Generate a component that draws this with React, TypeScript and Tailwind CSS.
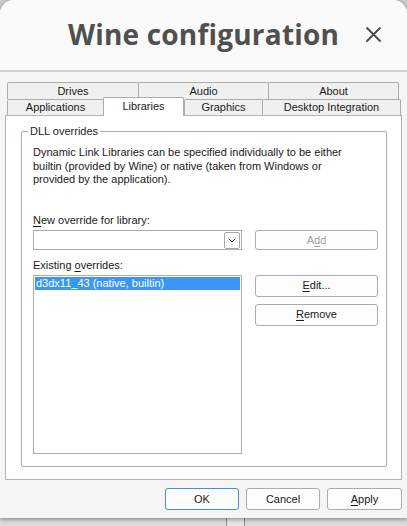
import React from 'react'

// Wine configuration dialog, "Libraries" tab

function Btn({
  children,
  className = '',
  disabled = false,
  primary = false,
}: {
  children: React.ReactNode
  className?: string
  disabled?: boolean
  primary?: boolean
}) {
  return (
    <div
      className={`flex items-center justify-center rounded-[3px] border bg-[#fdfdfd] text-[11px] ${
        primary ? 'border-[#3c92e6]' : 'border-[#acacac]'
      } ${disabled ? 'text-[#a3a3a3]' : 'text-[#1a1a1a]'} ${className}`}
    >
      {children}
    </div>
  )
}

function Tab({ label, width, selected = false, tall = false }: { label: string; width: string; selected?: boolean; tall?: boolean }) {
  if (selected) {
    return (
      <div className={`${width} relative z-10 -mt-[2px] flex h-[19px] items-center justify-center rounded-t-[2px] border border-b-0 border-[#acacac] bg-white pb-[1px]`}>
        {label}
      </div>
    )
  }
  return (
    <div
      className={`${width} ${tall ? 'h-[17px]' : 'h-[16px]'} flex items-center justify-center rounded-t-[2px] border border-b-0 border-[#acacac] bg-[#f0f0f0] -mr-px`}
    >
      {label}
    </div>
  )
}

export default function App() {
  return (
    <div className="flex h-[526px] w-[407px] flex-col overflow-hidden bg-[#cfcfcf] font-['Liberation_Sans',sans-serif] text-[11px] text-[#1a1a1a]">
      {/* window */}
      <div className="relative z-10 flex h-[518px] w-[407px] shrink-0 flex-col rounded-t-[14px] bg-[#f5f5f5] shadow-[0_1px_5px_rgba(0,0,0,0.45)]">
        {/* title bar */}
        <div className="relative flex h-[72px] shrink-0 items-center justify-center rounded-t-[14px] border-b-2 border-[#d2d2d2] bg-[#fafafa] pb-[2px]">
          <span className="font-['Open_Sans',sans-serif] text-[28px] font-bold tracking-[0.2px] text-[#505050]">Wine configuration</span>
          <div className="absolute right-[26px] top-[27px]">
            <svg width="15" height="15" viewBox="0 0 15 15">
              <path d="M1 1 L14 14 M14 1 L1 14" stroke="#4a4a4a" strokeWidth="1.8" strokeLinecap="round" />
            </svg>
          </div>
        </div>

        {/* body */}
        <div className="flex flex-1 flex-col px-[5px] pt-[10px]">
          {/* tabs */}
          <div className="flex flex-col px-[2px]">
            <div className="flex">
              <Tab label="Drives" width="w-[132px]" tall />
              <Tab label="Audio" width="w-[131px]" tall />
              <Tab label="About" width="w-[131px]" tall />
            </div>
            <div className="flex h-[16px] items-start">
              <Tab label="Applications" width="w-[97px]" />
              <Tab label="Libraries" width="w-[81px]" selected />
              <Tab label="Graphics" width="w-[79px]" />
              <Tab label="Desktop Integration" width="w-[139px]" />
            </div>
          </div>

          {/* tab page */}
          <div className="flex h-[365px] flex-col border border-[#b5b5b5] bg-white pl-[15px] pr-[14px] pt-[15px]">
            <div className="relative flex h-[336px] flex-col rounded-[2px] border border-[#ababab] pl-[11px] pr-[8px]">
              <span className="absolute -top-[8px] left-[6px] bg-white px-[2px] leading-[14px]">DLL overrides</span>

              <p className="mt-[14px] w-[318px] leading-[13.5px]">
                Dynamic Link Libraries can be specified individually to be either builtin (provided by Wine) or native (taken from
                Windows or provided by the application).
              </p>

              <div className="mt-[27px] leading-[13.5px]">
                <u className="underline-offset-[2px]">N</u>ew override for library:
              </div>
              <div className="mt-[3px] flex gap-[13px]">
                <div className="flex h-[20px] w-[209px] items-center justify-end border border-[#adadad] bg-white pr-[1px]">
                  <div className="flex h-[17px] w-[16px] items-center justify-center rounded-[2px] border border-[#a8a8a8]">
                    <svg width="8" height="5" viewBox="0 0 8 5">
                      <path d="M0.5 0.5 L4 4 L7.5 0.5" fill="none" stroke="#333" strokeWidth="1" />
                    </svg>
                  </div>
                </div>
                <Btn disabled className="h-[20px] w-[123px]">
                  A<u className="underline-offset-[2px]">d</u>d
                </Btn>
              </div>

              <div className="mt-[9px] leading-[13.5px]">
                Existing <u className="underline-offset-[2px]">o</u>verrides:
              </div>
              <div className="mt-[2px] flex gap-[13px]">
                <div className="h-[179px] w-[209px] border border-[#adadad] bg-white p-[1px]">
                  <div className="h-[13px] bg-[#3a97f4] pl-[1px] leading-[13px] text-white">d3dx11_43 (native, builtin)</div>
                </div>
                <div className="flex flex-col gap-[7px]">
                  <Btn className="h-[22px] w-[123px]">
                    <u className="underline-offset-[2px]">E</u>dit...
                  </Btn>
                  <Btn className="h-[22px] w-[123px]">
                    <u className="underline-offset-[2px]">R</u>emove
                  </Btn>
                </div>
              </div>
            </div>
          </div>

          {/* dialog buttons */}
          <div className="mt-[8px] flex justify-end gap-[7px]">
            <Btn primary className="h-[22px] w-[74px]">
              OK
            </Btn>
            <Btn className="h-[22px] w-[74px]">Cancel</Btn>
            <Btn className="h-[22px] w-[75px]">
              <u className="underline-offset-[2px]">A</u>pply
            </Btn>
          </div>
        </div>
      </div>

      {/* desktop strip under the window */}
      <div className="flex flex-1 bg-[#dcdcdc]">
        <div className="w-[226px]" />
        <div className="w-px bg-[#8f8f8f]" />
        <div className="w-[17px] bg-[#e6e6e6]" />
        <div className="w-px bg-[#8f8f8f]" />
      </div>
    </div>
  )
}
